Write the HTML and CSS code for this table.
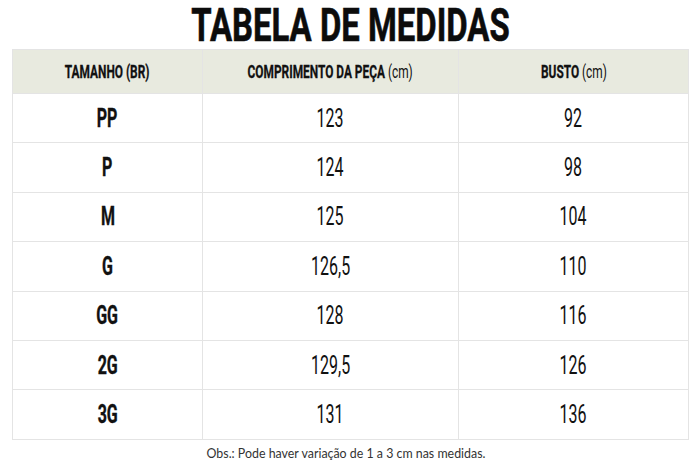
FILE: index.html
```html
<!DOCTYPE html>
<html lang="pt-BR">
<head>
<meta charset="utf-8">
<title>Tabela de Medidas</title>
<link rel="stylesheet" href="styles.css">
</head>
<body>
<div class="page">
  <h1 class="title"><span class="sq-title">TABELA DE MEDIDAS</span></h1>
  <table class="sizes">
    <colgroup>
      <col class="c1"><col class="c2"><col class="c3">
    </colgroup>
    <thead>
      <tr>
        <th><span class="sq-head">TAMANHO (BR)</span></th>
        <th><span class="sq-head">COMPRIMENTO DA PEÇA <span class="unit">(cm)</span></span></th>
        <th><span class="sq-head">BUSTO <span class="unit">(cm)</span></span></th>
      </tr>
    </thead>
    <tbody>
      <tr><td class="size"><span class="sq-b">PP</span></td><td><span class="sq-n">123</span></td><td><span class="sq-n">92</span></td></tr>
      <tr><td class="size"><span class="sq-b">P</span></td><td><span class="sq-n">124</span></td><td><span class="sq-n">98</span></td></tr>
      <tr><td class="size"><span class="sq-b">M</span></td><td><span class="sq-n">125</span></td><td><span class="sq-n">104</span></td></tr>
      <tr><td class="size"><span class="sq-b">G</span></td><td><span class="sq-n">126,5</span></td><td><span class="sq-n">110</span></td></tr>
      <tr><td class="size"><span class="sq-b">GG</span></td><td><span class="sq-n">128</span></td><td><span class="sq-n">116</span></td></tr>
      <tr><td class="size"><span class="sq-b">2G</span></td><td><span class="sq-n">129,5</span></td><td><span class="sq-n">126</span></td></tr>
      <tr><td class="size"><span class="sq-b">3G</span></td><td><span class="sq-n">131</span></td><td><span class="sq-n">136</span></td></tr>
    </tbody>
  </table>
  <p class="note">Obs.: Pode haver variação de 1 a 3 cm nas medidas.</p>
</div>
</body>
</html>
```
FILE: styles.css
```css
html, body {
  margin: 0;
  padding: 0;
  background: #ffffff;
}
.page {
  width: 700px;
  height: 467px;
  overflow: hidden;
  font-family: Roboto, "Liberation Sans", sans-serif;
  color: #111111;
}
.title {
  margin: 0;
  height: 49px;
  display: flex;
  justify-content: center;
  align-items: center;
  font-weight: 700;
  font-size: 47px;
  line-height: 49px;
  color: #0c0c0c;
}
.sq-title {
  display: inline-block;
  transform: scaleX(0.70);
  white-space: nowrap;
  -webkit-text-stroke: 0.6px #0c0c0c;
}
.sizes {
  margin-left: 12px;
  width: 676px;
  border-collapse: collapse;
  table-layout: fixed;
}
.c1 { width: 190px; }
.c2 { width: 256px; }
.c3 { width: 230px; }
.sizes th,
.sizes td {
  border: 1px solid #e4e4e4;
  text-align: center;
  padding: 0;
  white-space: nowrap;
}
.sizes th {
  background: #e8eadf;
  height: 43px;
  font-size: 18px;
  font-weight: 700;
}
.sizes td {
  height: 48.4px;
  font-size: 25px;
  font-weight: 400;
}
.sizes td.size {
  font-weight: 700;
}
.sq-head,
.sq-n,
.sq-b {
  display: inline-block;
  transform: scaleX(0.64);
}
.sq-head {
  transform: scaleX(0.66);
  -webkit-text-stroke: 0.3px #111111;
}
.sq-b {
  -webkit-text-stroke: 0.4px #111111;
}
.unit {
  font-weight: 400;
  -webkit-text-stroke: 0;
}
.note {
  margin: 6px 0 0 0;
  text-align: center;
  font-family: Lato, "Noto Sans", sans-serif;
  font-size: 12.4px;
  color: #333333;
  padding-right: 8px;
}
```
